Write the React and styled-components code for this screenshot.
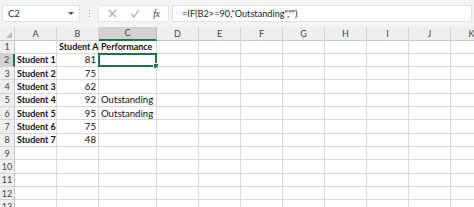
import React from 'react';
import styled, { createGlobalStyle } from 'styled-components';

const GlobalStyle = createGlobalStyle`
  html, body {
    margin: 0;
    padding: 0;
    background: #ffffff;
    overflow: hidden;
  }
  body {
    font-family: Lato, "Open Sans", sans-serif;
  }
`;

const Window = styled.div`
  width: 474px;
  height: 207px;
  overflow: hidden;
  display: flex;
  flex-direction: column;
  background: #ffffff;
`;

const Toolbar = styled.div`
  height: 27px;
  flex: none;
  display: flex;
  align-items: center;
  padding: 0 2px 0 2px;
  background: #f3f3f3;
  box-sizing: border-box;
`;

const NameBox = styled.div`
  width: 78px;
  height: 17px;
  box-sizing: border-box;
  background: #ffffff;
  border: 1px solid #e1e1e1;
  display: flex;
  align-items: center;
  justify-content: space-between;
  padding: 0 5px 0 5px;
  font-size: 9.5px;
  color: #333;
`;

const Caret = styled.span`
  width: 0;
  height: 0;
  border-left: 3px solid transparent;
  border-right: 3px solid transparent;
  border-top: 3px solid #555;
`;

const Grip = styled.div`
  width: 18px;
  display: flex;
  flex-direction: column;
  align-items: center;
  gap: 2px;
  span {
    width: 1px;
    height: 1px;
    background: #9a9a9a;
  }
`;

const ButtonBox = styled.div`
  width: 71px;
  height: 17px;
  margin-right: 3px;
  box-sizing: border-box;
  background: #ffffff;
  border: 1px solid #e6e6e6;
  display: flex;
  align-items: center;
  justify-content: space-around;
  padding: 0 2px;
`;

const Fx = styled.span`
  font-family: "Liberation Serif", serif;
  font-style: italic;
  font-size: 10px;
  color: #444;
  letter-spacing: -0.5px;
`;

const FormulaBox = styled.div`
  flex: 1;
  height: 17px;
  box-sizing: border-box;
  background: #ffffff;
  border: 1px solid #e1e1e1;
  display: flex;
  align-items: center;
  padding-left: 9px;
  font-size: 9.2px;
  color: #222;
  white-space: nowrap;
`;

const Sheet = styled.div`
  display: grid;
  grid-template-columns: 15px 42px 42px 58px repeat(8, 42px);
  grid-auto-rows: 13.33px;
  grid-template-rows: 13.5px;
`;

const Corner = styled.div`
  background: #efefef;
  border-right: 1px solid #cfcfcf;
  border-bottom: 1px solid #c8c8c8;
  box-sizing: border-box;
  position: relative;
  &::after {
    content: '';
    position: absolute;
    right: 2px;
    bottom: 2px;
    border-left: 6px solid transparent;
    border-bottom: 6px solid #b8b8b8;
  }
`;

const ColHead = styled.div`
  background: ${(p) => (p.$active ? '#d2d2d2' : '#efefef')};
  border-right: 1px solid ${(p) => (p.$active ? '#bdbdbd' : '#d4d4d4')};
  border-bottom: ${(p) => (p.$active ? '2px solid #217346' : '1px solid #c8c8c8')};
  box-sizing: border-box;
  display: flex;
  align-items: center;
  justify-content: center;
  font-size: 9px;
  color: #444;
`;

const RowHead = styled.div`
  background: ${(p) => (p.$active ? '#d2d2d2' : '#efefef')};
  border-right: ${(p) => (p.$active ? '2px solid #217346' : '1px solid #c8c8c8')};
  border-bottom: 1px solid #d4d4d4;
  box-sizing: border-box;
  display: flex;
  align-items: center;
  justify-content: center;
  font-size: 9px;
  color: #444;
`;

const Cell = styled.div`
  border-right: 1px solid #dadada;
  border-bottom: 1px solid #dadada;
  box-sizing: border-box;
  display: flex;
  align-items: center;
  justify-content: ${(p) => (p.$num ? 'flex-end' : 'flex-start')};
  padding: 0 2px;
  font-size: ${(p) => (p.$bold ? '9px' : '9.6px')};
  font-weight: ${(p) => (p.$bold ? 700 : 400)};
  color: #111;
  white-space: nowrap;
  overflow: visible;
  position: relative;
`;

const Selection = styled.div`
  position: absolute;
  left: -1px;
  top: -1px;
  right: -1px;
  bottom: -1px;
  border: 2px solid #217346;
  pointer-events: none;
  &::after {
    content: '';
    position: absolute;
    right: -4px;
    bottom: -4px;
    width: 4px;
    height: 4px;
    background: #217346;
    border: 1px solid #ffffff;
  }
`;

const columns = ['A', 'B', 'C', 'D', 'E', 'F', 'G', 'H', 'I', 'J', 'K'];

const data = [
  ['', 'Student A', 'Performance'],
  ['Student 1', '81', ''],
  ['Student 2', '75', ''],
  ['Student 3', '62', ''],
  ['Student 4', '92', 'Outstanding'],
  ['Student 5', '95', 'Outstanding'],
  ['Student 6', '75', ''],
  ['Student 7', '48', ''],
  ['', '', ''],
  ['', '', ''],
  ['', '', ''],
  ['', '', ''],
  ['', '', ''],
];

function CrossIcon() {
  return (
    <svg width="9" height="9" viewBox="0 0 9 9">
      <path d="M1 1 L8 8 M8 1 L1 8" stroke="#a6a6a6" strokeWidth="1.1" fill="none" />
    </svg>
  );
}

function CheckIcon() {
  return (
    <svg width="10" height="9" viewBox="0 0 10 9">
      <path d="M1 5 L3.8 7.8 L9 1" stroke="#a6a6a6" strokeWidth="1.1" fill="none" />
    </svg>
  );
}

export default function App() {
  return (
    <Window>
      <GlobalStyle />
      <Toolbar>
        <NameBox>
          C2
          <Caret />
        </NameBox>
        <Grip>
          <span />
          <span />
          <span />
        </Grip>
        <ButtonBox>
          <CrossIcon />
          <CheckIcon />
          <Fx>fx</Fx>
        </ButtonBox>
        <FormulaBox>=IF(B2&gt;=90,"Outstanding","")</FormulaBox>
      </Toolbar>
      <Sheet>
        <Corner />
        {columns.map((c) => (
          <ColHead key={c} $active={c === 'C'}>
            {c}
          </ColHead>
        ))}
        {data.map((row, r) => (
          <React.Fragment key={r}>
            <RowHead $active={r === 1}>{r + 1}</RowHead>
            {columns.map((c, i) => {
              const value = row[i] || '';
              const isNum = i === 1 && r > 0;
              const isBold = i === 0 || r === 0;
              return (
                <Cell key={c} $num={isNum} $bold={isBold}>
                  {value}
                  {r === 1 && c === 'C' && <Selection />}
                </Cell>
              );
            })}
          </React.Fragment>
        ))}
      </Sheet>
    </Window>
  );
}
